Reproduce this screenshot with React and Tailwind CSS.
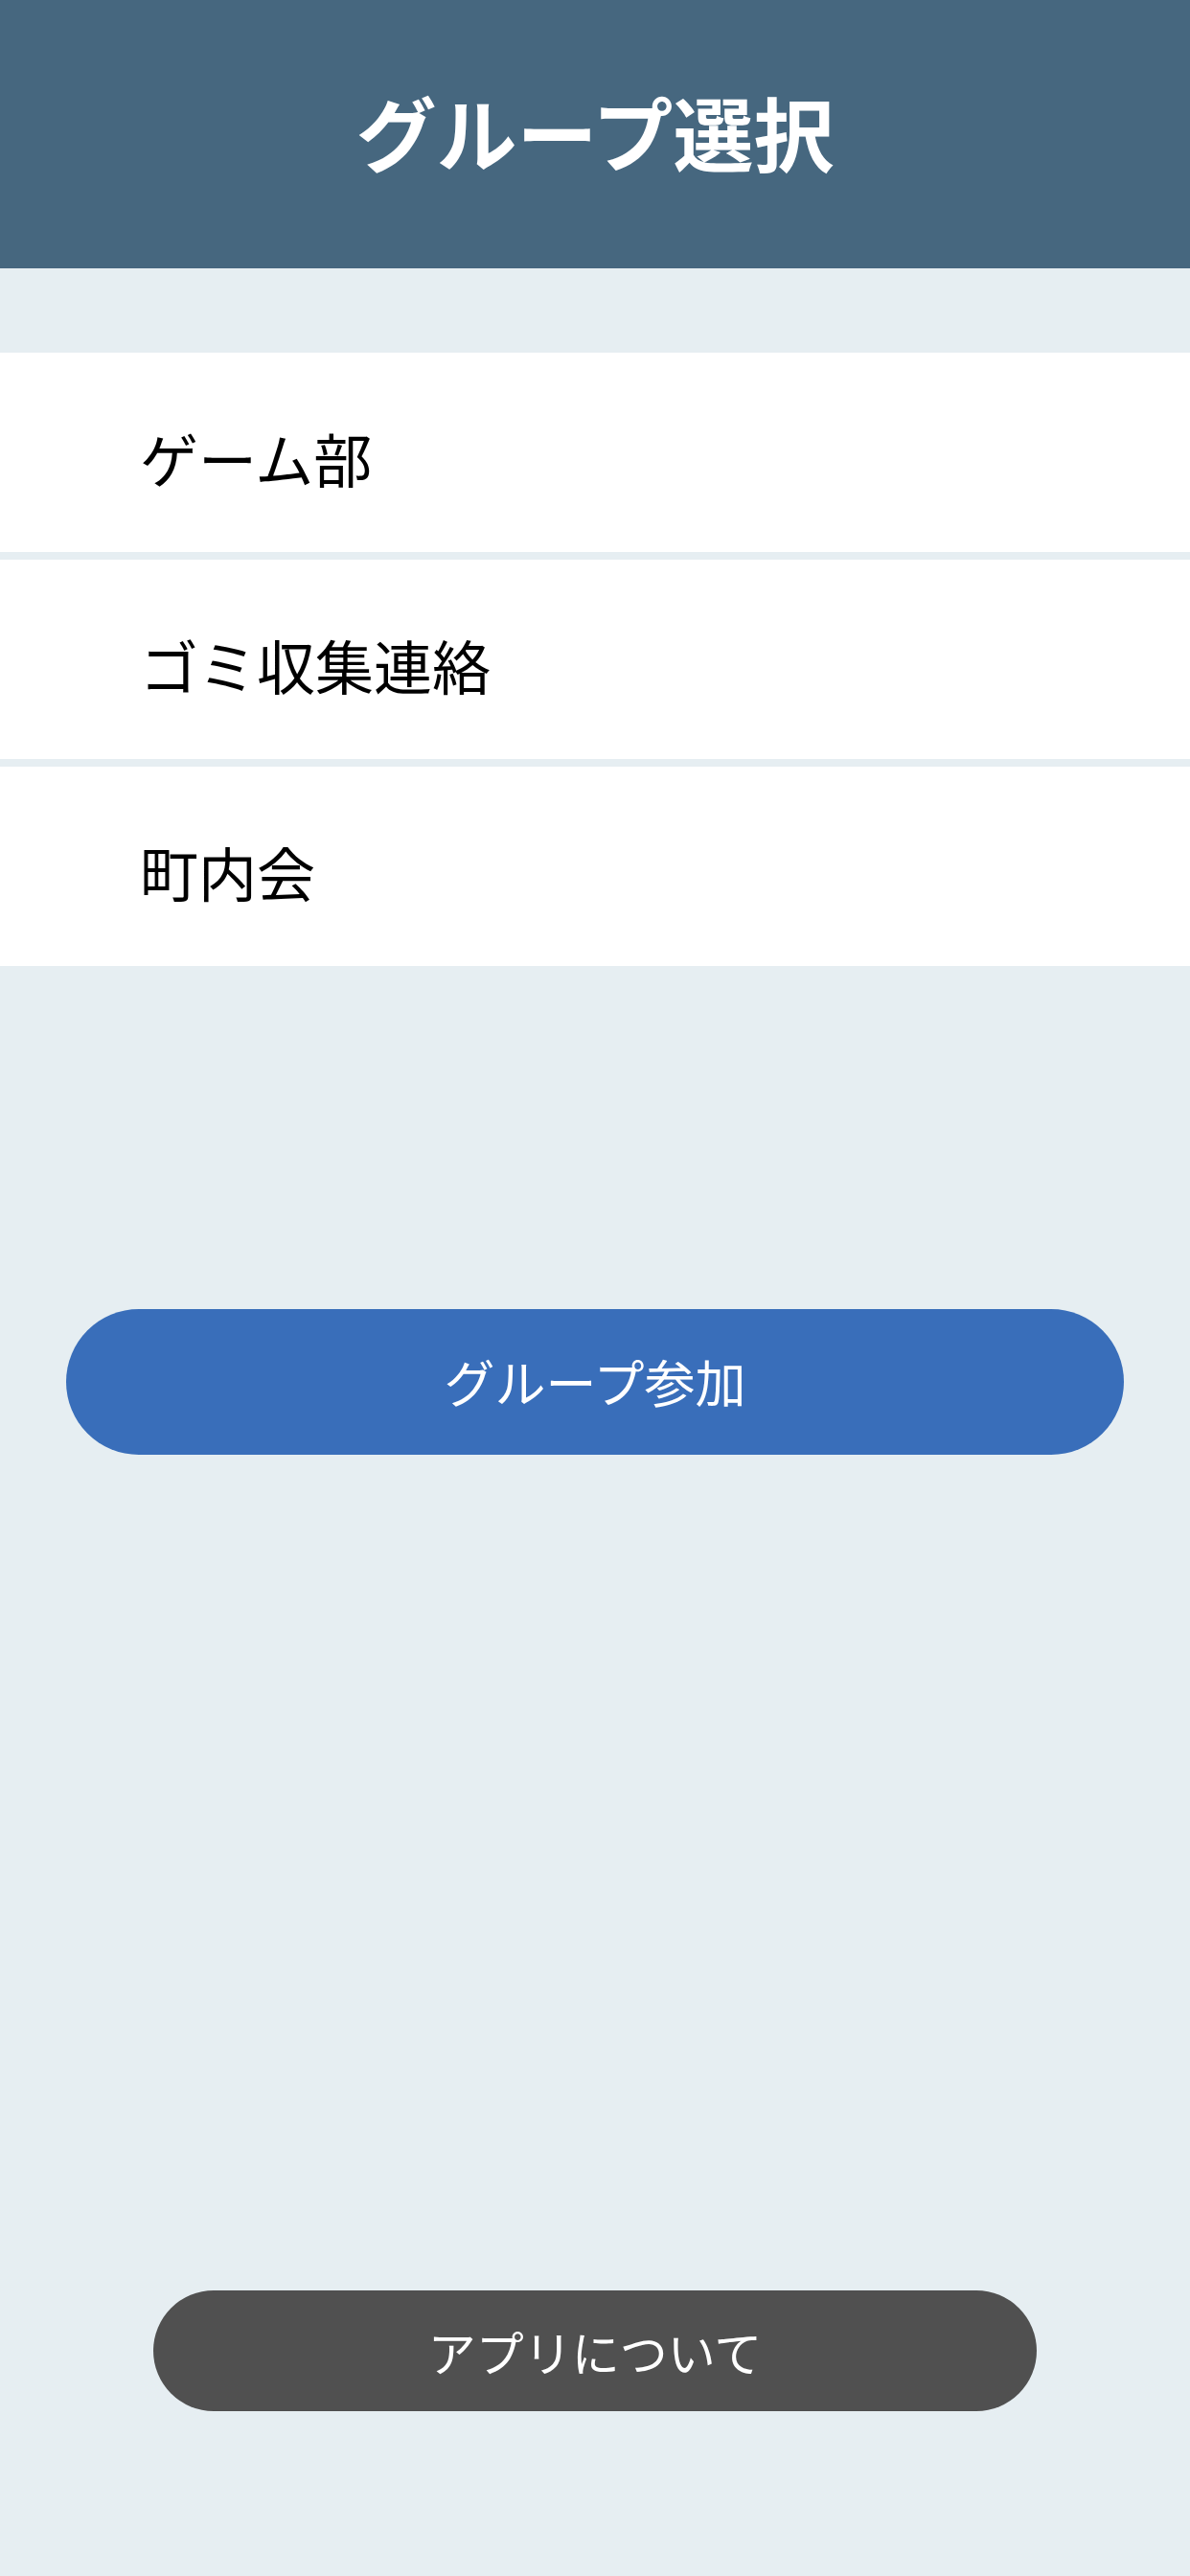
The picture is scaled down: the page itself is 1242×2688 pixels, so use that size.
import React from 'react';

const groups = ['ゲーム部', 'ゴミ収集連絡', '町内会'];

const jp = { fontFamily: '"Noto Sans CJK JP", "Noto Sans", sans-serif' };

export default function App() {
  return (
    <div className="flex min-h-[2688px] w-[1242px] flex-col bg-[#e6eef2]" style={jp}>
      <header className="flex h-[280px] items-center justify-center bg-[#46677f] pb-[6px]">
        <h1 className="text-[84px] font-bold leading-none text-white">グループ選択</h1>
      </header>

      <ul className="mt-[88px] flex flex-col gap-[8px]">
        {groups.map((name) => (
          <li
            key={name}
            className="flex h-[208px] items-center bg-white pl-[146px] pt-[10px] text-[61px] leading-none text-black"
          >
            {name}
          </li>
        ))}
      </ul>

      <button className="mx-[69px] mt-[358px] h-[152px] rounded-full bg-[#396eba] text-[53px] font-normal text-white">
        グループ参加
      </button>

      <div className="flex-1" />

      <button className="mx-[160px] mb-[172px] h-[126px] rounded-full bg-[#505050] text-[50px] font-normal text-white">
        アプリについて
      </button>
    </div>
  );
}
